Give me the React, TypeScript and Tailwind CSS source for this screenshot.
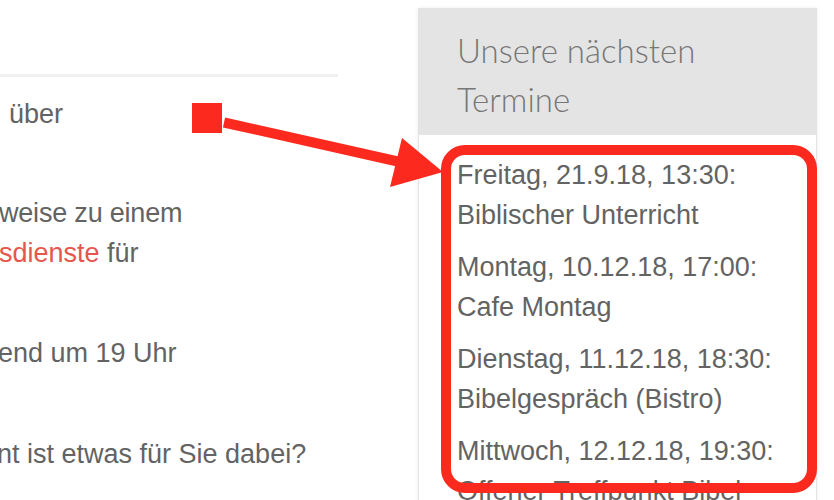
import React from 'react';

const termine = [
  { datum: 'Freitag, 21.9.18, 13:30:', titel: 'Biblischer Unterricht' },
  { datum: 'Montag, 10.12.18, 17:00:', titel: 'Cafe Montag' },
  { datum: 'Dienstag, 11.12.18, 18:30:', titel: 'Bibelgespräch (Bistro)' },
  { datum: 'Mittwoch, 12.12.18, 19:30:', titel: 'Offener Treffpunkt Bibel' },
];

export default function App() {
  return (
    <div className="relative w-[834px] h-[500px] overflow-hidden bg-white flex font-['Liberation_Sans',Arial,sans-serif] text-[27px] text-[#636363]">
      {/* main content column, cut off on the left */}
      <div className="w-[338px] shrink-0 overflow-hidden pt-[74px]">
        <div className="h-[3px] bg-[#f0f0f0]" />
        <div className="leading-[40px] whitespace-nowrap">
          <p className="mt-[17px] pl-[9px]">über</p>
          <p className="mt-[59px] -ml-[1px] tracking-[-0.2px]">weise zu einem</p>
          <p className="-ml-[1px]">
            <a className="text-[#e5574d]">sdienste</a> für
          </p>
          <p className="mt-[60px] -ml-[2px]">end um 19 Uhr</p>
          <p className="mt-[61px] -ml-[3px]">nt ist etwas für Sie dabei?</p>
        </div>
      </div>

      {/* sidebar widget */}
      <div className="ml-[80px] mt-[8px] w-[399px] shrink-0 self-start border border-[#e3e3e3] shadow-[0_0_4px_rgba(0,0,0,0.08)]">
        <div className="bg-[#e4e4e4] pl-[38px] pt-[17px] pb-[11px] font-['Lato','Open_Sans',sans-serif] font-light text-[33px] leading-[49px] text-[#777777]">
          <div>Unsere nächsten</div>
          <div>Termine</div>
        </div>
        <div className="bg-white pl-[38px] pt-[21px] leading-[39.5px] whitespace-nowrap">
          {termine.map((t) => (
            <p key={t.datum} className="mb-[13px]">
              {t.datum}
              <br />
              {t.titel}
            </p>
          ))}
        </div>
      </div>

      {/* red annotation */}
      <div className="absolute left-[441px] top-[145px] w-[376px] h-[348px] border-[10px] border-[#fc2a1e] rounded-[24px]" />
      <svg className="absolute left-0 top-0 pointer-events-none" width="834" height="500" viewBox="0 0 834 500">
        <rect x="192" y="103" width="30" height="30" fill="#fc2a1e" />
        <line x1="224" y1="122.5" x2="400" y2="162" stroke="#fc2a1e" strokeWidth="10" />
        <polygon points="402,138 443,172 390,187" fill="#fc2a1e" />
      </svg>
    </div>
  );
}
